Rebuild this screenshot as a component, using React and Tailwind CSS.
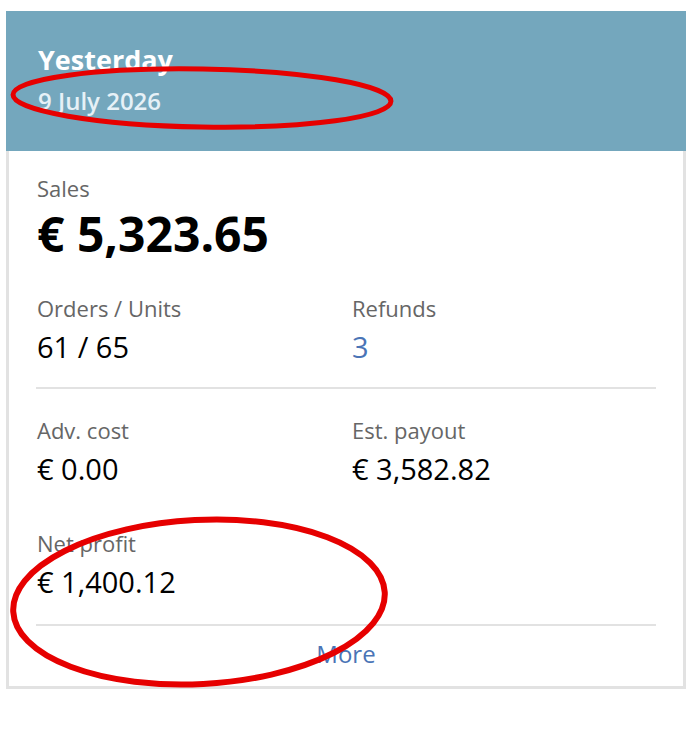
import React from 'react';

// Kennzahlen für den Tag
const stats = [
  [
    { label: 'Orders / Units', value: '61 / 65' },
    { label: 'Refunds', value: '3', link: true },
  ],
  [
    { label: 'Adv. cost', value: '€ 0.00' },
    { label: 'Est. payout', value: '€ 3,582.82' },
  ],
];

const Stat = ({ label, value, link }) => (
  <div>
    <p className="text-[22px] leading-[28px] text-[#666666]">{label}</p>
    <p className={`mt-[8px] text-[29px] leading-[34px] ${link ? 'text-[#4a74b6]' : 'text-black'}`}>
      {value}
    </p>
  </div>
);

const App = () => {
  return (
    <div
      className="relative w-[694px] h-[752px] bg-white pt-[11px] px-[6px]"
      style={{ fontFamily: '"Open Sans", "Noto Sans", sans-serif' }}
    >
      <div className="w-[680px]">
        <div className="h-[140px] bg-[#74a7bd] px-[32px] pt-[33px]">
          <p className="text-[27px] leading-[32px] font-bold text-white">Yesterday</p>
          <p className="mt-[11px] text-[24px] leading-[28px] font-semibold text-[#e6f1f7]">9 July 2026</p>
        </div>

        <div className="border-x-[3px] border-b-[3px] border-[#e2e2e2] px-[27px] pt-[23px] pb-[18px]">
          <p className="pl-[1px] text-[22px] leading-[28px] text-[#666666]">Sales</p>
          <p className="pl-[1px] mt-[8px] text-[48px] leading-[48px] font-bold text-black">€ 5,323.65</p>

          <div className="pl-[1px] mt-[36px] grid grid-cols-[315px_1fr]">
            {stats[0].map((s) => (
              <Stat key={s.label} {...s} />
            ))}
          </div>

          <div className="mt-[23px] h-[2px] bg-[#e2e2e2]" />

          <div className="pl-[1px] mt-[27px] grid grid-cols-[315px_1fr]">
            {stats[1].map((s) => (
              <Stat key={s.label} {...s} />
            ))}
          </div>

          <div className="pl-[1px] mt-[43px]">
            <Stat label="Net profit" value="€ 1,400.12" />
          </div>

          <div className="mt-[25px] h-[2px] bg-[#e2e2e2]" />

          <p className="mt-[14px] text-center text-[24px] leading-[28px] text-[#4a74b6]">More</p>
        </div>
      </div>

      {/* Markierungen */}
      <svg className="absolute left-0 top-0 pointer-events-none" width="694" height="752" viewBox="0 0 694 752">
        <ellipse cx="202" cy="98" rx="189" ry="29" fill="none" stroke="#e60000" strokeWidth="5" transform="rotate(1 202 98)" />
        <ellipse cx="199" cy="602" rx="186" ry="82" fill="none" stroke="#e60000" strokeWidth="6" transform="rotate(-3 199 602)" />
      </svg>
    </div>
  );
};

export default App;
